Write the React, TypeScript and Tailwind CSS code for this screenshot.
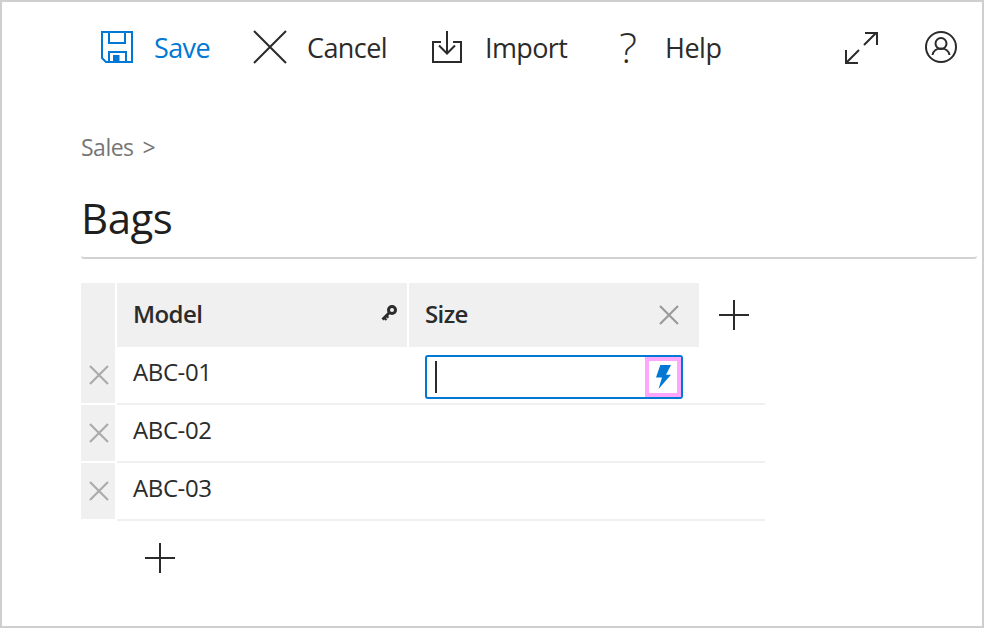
import React from "react";

const font = { fontFamily: '"Open Sans", "Noto Sans", sans-serif' };

function Cross({ size = 34, color = "#2b2b2b", width = 2 }: { size?: number; color?: string; width?: number }) {
  return (
    <svg width={size} height={size} viewBox={`0 0 ${size} ${size}`} fill="none" className="shrink-0">
      <path d={`M1 1L${size - 1} ${size - 1}M${size - 1} 1L1 ${size - 1}`} stroke={color} strokeWidth={width} />
    </svg>
  );
}

function Plus() {
  return (
    <svg width="30" height="30" viewBox="0 0 30 30" fill="none" className="shrink-0">
      <path d="M0 15H30M15 0V30" stroke="#2b2b2b" strokeWidth="2" />
    </svg>
  );
}

function SaveIcon() {
  return (
    <svg width="32" height="32" viewBox="0 0 32 32" fill="none" className="shrink-0">
      <path d="M1 1H31V31H5L1 27V1Z" stroke="#0078d4" strokeWidth="2" />
      <path d="M8 1V12H24V1M8 31V21H25V31" stroke="#0078d4" strokeWidth="2" />
      <rect x="12" y="24" width="6.5" height="8" fill="#0078d4" />
    </svg>
  );
}

function ImportIcon() {
  return (
    <svg width="30" height="32" viewBox="0 0 30 32" fill="none" className="shrink-0">
      <path d="M9 11H1V31H29V11H21" stroke="#2b2b2b" strokeWidth="2" />
      <path d="M15 0V22M7 14.5L15 22.5L23 14.5" stroke="#2b2b2b" strokeWidth="2" />
    </svg>
  );
}

function ExpandIcon() {
  return (
    <svg width="33" height="33" viewBox="0 0 33 33" fill="none" className="shrink-0">
      <path d="M31 2L19 14M20 2H32V14M14 19L2 31M1 19V32H13" stroke="#2b2b2b" strokeWidth="2" />
    </svg>
  );
}

function UserIcon() {
  return (
    <svg width="32" height="32" viewBox="0 0 32 32" fill="none" className="shrink-0">
      <circle cx="16" cy="16" r="15" stroke="#2b2b2b" strokeWidth="2" />
      <circle cx="16" cy="12.5" r="5.5" stroke="#2b2b2b" strokeWidth="2" />
      <path d="M7.5 24C8 20 11.5 17.5 16 17.5C20.5 17.5 24 20 24.5 24" stroke="#2b2b2b" strokeWidth="2" />
    </svg>
  );
}

function KeyIcon() {
  return (
    <svg width="16" height="16" viewBox="0 0 16 16" fill="none" className="shrink-0 mb-[5px]">
      <circle cx="11" cy="5" r="3.5" stroke="#2b2b2b" strokeWidth="3" />
      <path d="M8.5 7.5L1.5 14.5" stroke="#2b2b2b" strokeWidth="2.8" />
      <path d="M3 12.5L5.5 15M5.2 10.5L7.4 12.7" stroke="#2b2b2b" strokeWidth="2" />
    </svg>
  );
}

function Bolt() {
  return (
    <svg width="15" height="24" viewBox="0 0 15 24" className="shrink-0">
      <path d="M4.3 0H15L10 9.7H15L2.5 24L6 12.5H0Z" fill="#0078d4" />
    </svg>
  );
}

function ToolButton({ icon, label, blue, className }: { icon: React.ReactNode; label: string; blue?: boolean; className: string }) {
  return (
    <div className={`flex items-center ${className}`}>
      {icon}
      <span className={`pt-[2px] text-[27px] leading-[32px] tracking-[-0.6px] ${blue ? "text-[#0078d4]" : "text-[#2b2b2b]"}`}>{label}</span>
    </div>
  );
}

function Row({ label, children }: { label: string; children?: React.ReactNode }) {
  return (
    <div className="flex h-[58px]">
      <div className="w-[34px] h-[56px] pl-[2px] bg-[#f0f0f0] flex items-center justify-center">
        <Cross size={20} color="#ababab" width={2.2} />
      </div>
      <div className="ml-[2px] w-[648px] h-[58px] border-b-2 border-[#f0f0f0] flex">
        <div className="w-[292px] pl-[16px] pt-[8px] text-[24px] leading-[34px] tracking-[-0.4px] text-[#2b2b2b]">{label}</div>
        {children}
      </div>
    </div>
  );
}

export default function App() {
  return (
    <div style={font} className="w-[984px] h-[628px] bg-white border-2 border-[#cfcfcf] overflow-hidden">
      <div className="flex items-center pt-[29px] h-[61px]">
        <ToolButton icon={<SaveIcon />} label="Save" blue className="ml-[99px] gap-[21px]" />
        <ToolButton icon={<Cross size={34} />} label="Cancel" className="ml-[43px] gap-[20px]" />
        <ToolButton icon={<ImportIcon />} label="Import" className="ml-[45px] gap-[23px]" />
        <div className="ml-[52px] flex items-center gap-[28px]">
          <span className="text-[42px] leading-[32px] font-light text-[#2b2b2b]">?</span>
          <span className="pt-[2px] text-[27px] leading-[32px] tracking-[-0.5px] text-[#2b2b2b]">Help</span>
        </div>
        <div className="ml-auto mr-[25px] flex items-center gap-[47px]">
          <ExpandIcon />
          <UserIcon />
        </div>
      </div>

      <div className="ml-[79px]">
        <div className="mt-[69px] flex text-[23px] leading-[30px] tracking-[-0.5px] text-[#767676]">
          <span>Sales</span>
          <span className="ml-[9px]">&gt;</span>
        </div>
        <div className="mt-[22px] w-[896px] h-[75px] pt-[8px] border-b-2 border-[#d2d2d2] rounded-b-[3px] text-[42px] leading-[52px] tracking-[-0.5px] text-[#1f1f1f]">Bags</div>

        <div className="mt-[24px] flex">
          <div className="w-[34px] h-[64px] bg-[#f0f0f0]" />
          <div className="ml-[2px] w-[290px] h-[64px] bg-[#f0f0f0] flex items-center justify-between pl-[16px] pr-[10px]">
            <span className="pb-[2px] text-[24px] tracking-[-0.6px] font-semibold text-[#2b2b2b]">Model</span>
            <KeyIcon />
          </div>
          <div className="ml-[2px] w-[290px] h-[64px] bg-[#f0f0f0] flex items-center justify-between pl-[16px] pr-[20px]">
            <span className="pb-[2px] text-[24px] tracking-[-0.6px] font-semibold text-[#2b2b2b]">Size</span>
            <Cross size={20} color="#9a9a9a" width={2.2} />
          </div>
          <div className="ml-[20px] h-[64px] flex items-center">
            <Plus />
          </div>
        </div>

        <Row label="ABC-01">
          <div className="ml-[16px] mt-[8px] w-[258px] h-[44px] border-2 border-[#0078d4] rounded-[3px] flex items-center justify-between">
            <div className="ml-[8px] w-[2px] h-[32px] bg-[#2b2b2b]" />
            <div className="w-[36px] h-[40px] border-[4px] border-[#ffa6ff] flex items-center justify-center">
              <Bolt />
            </div>
          </div>
        </Row>
        <Row label="ABC-02" />
        <Row label="ABC-03" />

        <div className="ml-[64px] mt-[22px]">
          <Plus />
        </div>
      </div>
    </div>
  );
}
